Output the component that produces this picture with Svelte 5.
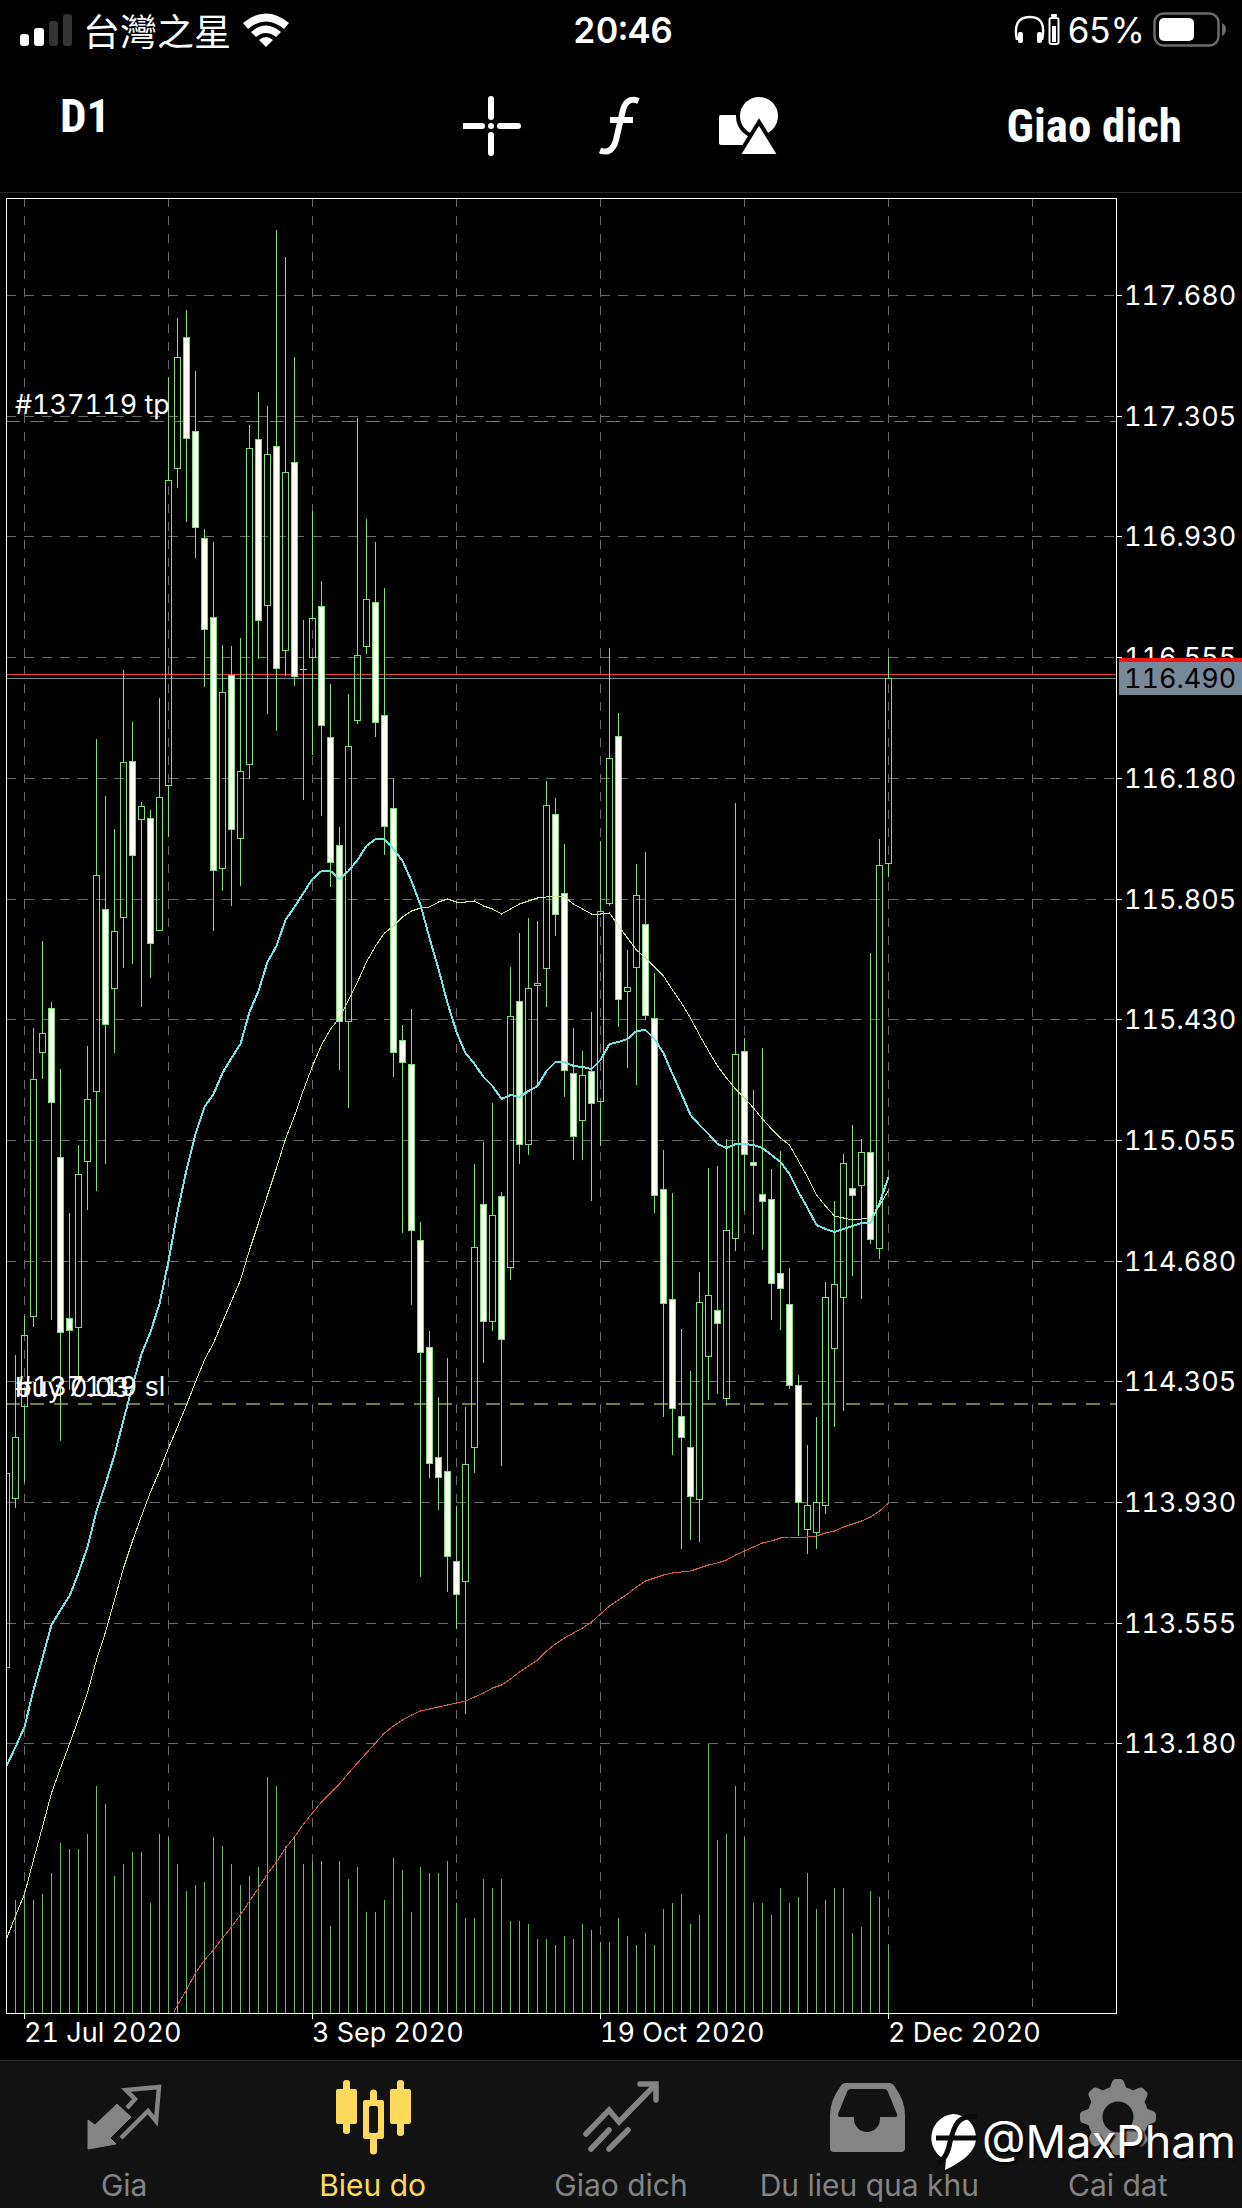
<script>
	// one bar every 9 units, the first one sits on the left edge of the plot
	const FIRST = 6;
	const STEP = 9;
	const BOTTOM = 2013;
	const barX = (i) => FIRST + i * STEP;

	// high, body top, body bottom, low, bearish
	const candles = [
		[1473, 1473, 1667, 1667, 0], [1355, 1437, 1498, 1508, 0], [1316, 1335, 1406, 1482, 0],
		[1028, 1079, 1316, 1327, 0], [941, 1033, 1052, 1079, 0], [1002, 1008, 1102, 1320, 1],
		[1069, 1157, 1332, 1441, 1], [1213, 1318, 1330, 1390, 1], [1145, 1174, 1327, 1382, 0],
		[1046, 1099, 1161, 1210, 0], [739, 875, 1091, 1191, 0], [796, 909, 1024, 1164, 1],
		[829, 931, 988, 1053, 0], [670, 762, 917, 968, 0], [722, 761, 855, 964, 1],
		[802, 806, 819, 1007, 0], [810, 818, 943, 978, 1], [698, 797, 930, 931, 0],
		[377, 480, 785, 837, 0], [318, 357, 468, 488, 0], [310, 337, 438, 522, 1],
		[371, 431, 527, 558, 1], [529, 538, 629, 687, 1], [542, 617, 870, 931, 1],
		[645, 692, 868, 891, 0], [646, 675, 829, 906, 1], [638, 771, 838, 886, 0],
		[425, 448, 764, 779, 0], [392, 439, 620, 659, 1], [406, 454, 605, 714, 0],
		[230, 446, 668, 731, 1], [257, 472, 650, 676, 0], [357, 462, 676, 686, 1],
		[620, 669, 669, 800, 0], [511, 618, 657, 755, 0], [581, 606, 725, 816, 1],
		[684, 737, 862, 887, 1], [827, 845, 1021, 1070, 1], [694, 746, 1021, 1108, 0],
		[418, 655, 720, 724, 0], [519, 599, 646, 654, 0], [542, 602, 722, 737, 1],
		[588, 715, 826, 855, 1], [778, 808, 1052, 1077, 1], [1025, 1040, 1062, 1233, 1],
		[1009, 1064, 1230, 1305, 1], [1222, 1240, 1352, 1577, 1], [1331, 1347, 1463, 1478, 1],
		[1397, 1457, 1477, 1510, 1], [1358, 1471, 1556, 1592, 1], [1506, 1561, 1594, 1629, 1],
		[1407, 1464, 1581, 1714, 0], [1164, 1247, 1447, 1473, 0], [1142, 1204, 1321, 1363, 1],
		[1103, 1215, 1321, 1331, 0], [1192, 1196, 1339, 1466, 1], [967, 1016, 1267, 1280, 0],
		[933, 1001, 1144, 1164, 1], [918, 988, 1144, 1155, 0], [921, 983, 985, 1087, 0],
		[781, 805, 968, 1007, 0], [798, 814, 914, 936, 1], [844, 893, 1070, 1097, 1],
		[1028, 1073, 1136, 1160, 1], [1051, 1075, 1120, 1160, 0], [1012, 1071, 1103, 1201, 1],
		[841, 911, 1101, 1146, 0], [648, 758, 903, 906, 0], [713, 736, 999, 1027, 1],
		[950, 987, 991, 1068, 0], [864, 895, 967, 1085, 0], [852, 924, 1015, 1020, 1],
		[973, 1018, 1195, 1213, 1], [1150, 1189, 1303, 1417, 1], [1193, 1299, 1408, 1455, 1],
		[1329, 1416, 1437, 1549, 1], [1371, 1447, 1496, 1540, 1], [1272, 1302, 1499, 1542, 0],
		[1168, 1295, 1356, 1400, 0], [1166, 1310, 1323, 1394, 1], [1139, 1230, 1398, 1406, 0],
		[803, 1054, 1238, 1251, 0], [1038, 1051, 1154, 1211, 1], [1090, 1162, 1165, 1235, 1],
		[1048, 1194, 1201, 1250, 1], [1169, 1199, 1283, 1320, 1], [1151, 1273, 1288, 1330, 1],
		[1268, 1304, 1385, 1389, 1], [1375, 1385, 1502, 1536, 1], [1445, 1505, 1529, 1554, 0],
		[1417, 1502, 1532, 1549, 0], [1282, 1297, 1505, 1514, 0], [1201, 1284, 1348, 1427, 0],
		[1154, 1163, 1297, 1411, 0], [1125, 1188, 1195, 1276, 1], [1139, 1152, 1185, 1299, 0],
		[953, 1152, 1239, 1244, 1], [839, 865, 1248, 1259, 0], [657, 678, 863, 877, 0]
	];

	const volumes = [
		0, 113, 119, 113, 119, 140, 170, 164, 164, 179, 227, 209, 137, 149, 161, 161, 110, 179, 176,
		149, 122, 128, 131, 176, 167, 149, 128, 137, 146, 236, 227, 167, 176, 149, 152, 152, 87, 152,
		134, 146, 101, 101, 113, 155, 143, 101, 146, 140, 140, 152, 110, 95, 95, 134, 125, 134, 92, 92,
		89, 74, 74, 68, 77, 74, 89, 83, 71, 71, 95, 77, 68, 80, 68, 104, 110, 119, 89, 98, 269, 173,
		179, 227, 176, 110, 110, 98, 125, 110, 116, 140, 104, 113, 125, 125, 80, 86, 122, 116, 68
	];

	const fast = [
		1766, 1747, 1727, 1690, 1658, 1625, 1610, 1596, 1573, 1547, 1511, 1484, 1455, 1420, 1386, 1354,
		1332, 1304, 1261, 1212, 1170, 1134, 1107, 1094, 1073, 1058, 1044, 1012, 991, 962, 946, 920, 907,
		893, 879, 871, 871, 879, 871, 860, 846, 839, 839, 849, 861, 881, 905, 938, 969, 1003, 1032,
		1053, 1064, 1077, 1086, 1099, 1095, 1097, 1091, 1086, 1071, 1062, 1062, 1066, 1067, 1069, 1060,
		1044, 1042, 1039, 1031, 1030, 1039, 1053, 1074, 1094, 1115, 1125, 1134, 1144, 1148, 1144, 1144,
		1145, 1148, 1155, 1162, 1174, 1192, 1208, 1225, 1229, 1232, 1229, 1226, 1223, 1223, 1203, 1177
	];
	const slow = [
		1939, 1916, 1894, 1860, 1827, 1793, 1768, 1744, 1719, 1693, 1660, 1632, 1600, 1568, 1541, 1516,
		1492, 1471, 1448, 1427, 1405, 1382, 1360, 1343, 1322, 1301, 1280, 1250, 1223, 1195, 1168, 1139,
		1116, 1090, 1066, 1045, 1029, 1018, 1000, 982, 962, 946, 933, 926, 917, 911, 908, 907, 902, 899,
		902, 902, 901, 906, 909, 914, 909, 904, 901, 898, 897, 896, 897, 904, 909, 914, 914, 913, 926,
		938, 950, 958, 967, 976, 990, 1003, 1018, 1035, 1051, 1066, 1078, 1089, 1098, 1108, 1119, 1129,
		1138, 1145, 1161, 1177, 1195, 1206, 1216, 1218, 1220, 1219, 1218, 1206, 1190
	];
	// enters the plot from below at bar 19
	const trend = [
		2005, 1990, 1973, 1960, 1950, 1938, 1927, 1915, 1901, 1888, 1874, 1862, 1848, 1837, 1824, 1813,
		1802, 1793, 1784, 1773, 1763, 1753, 1743, 1733, 1726, 1720, 1715, 1711, 1709, 1707, 1705, 1703,
		1701, 1697, 1693, 1688, 1685, 1679, 1672, 1666, 1660, 1651, 1644, 1638, 1633, 1628, 1622, 1614,
		1606, 1600, 1594, 1587, 1581, 1578, 1575, 1573, 1572, 1571, 1568, 1565, 1563, 1560, 1555, 1551,
		1547, 1543, 1541, 1538, 1537, 1537, 1537, 1536, 1533, 1531, 1527, 1524, 1521, 1517, 1511, 1503
	];
	const toPoints = (ys, from = 0) => ys.map((y, i) => `${barX(i + from) + 0.5},${y}`).join(' ');

	const prices = [
		'117.680', '117.305', '116.930', '116.555', '116.180', '115.805', '115.430',
		'115.055', '114.680', '114.305', '113.930', '113.555', '113.180'
	].map((label, i) => ({ label, y: Math.round(295 + i * 120.7) + 0.5 }));

	const columns = [24, 168, 312, 456, 600, 744, 888, 1032];
	const dates = [
		{ label: '21 Jul 2020', x: 24 },
		{ label: '3 Sep 2020', x: 312 },
		{ label: '19 Oct 2020', x: 600 },
		{ label: '2 Dec 2020', x: 888 }
	];

	const teeth = [0, 45, 90, 135, 180, 225, 270, 315];

	let active = $state('chart');
</script>

{#snippet quotes()}
	<polygon points="4,43 11,48 33,27 47,40 26,61 32,67 4,72" fill="currentColor" stroke="currentColor" stroke-width="1" stroke-linejoin="round" />
	<polyline points="43,31 51,22 42,13 75,10 72,44 64,34 37,61" fill="none" stroke="currentColor" stroke-width="4.5" />
{/snippet}

{#snippet chart()}
	<g fill="currentColor">
		<rect x="3" y="12" width="21" height="35" rx="2" />
		<rect x="10" y="3" width="7" height="54" rx="3" />
		<rect x="57" y="12" width="21" height="35" rx="2" />
		<rect x="64" y="3" width="7" height="56" rx="3" />
		<path fill-rule="evenodd" d="M32 23h17a2 2 0 0 1 2 2v35a2 2 0 0 1-2 2H32a2 2 0 0 1-2-2V25a2 2 0 0 1 2-2zM38 29a2 2 0 0 0-2 2v23a2 2 0 0 0 2 2h5a2 2 0 0 0 2-2V31a2 2 0 0 0-2-2z" />
		<path d="M37 24v-8a3 3 0 0 1 7 0v8zM37 61v13a3 3 0 0 0 7 0V61z" />
	</g>
{/snippet}

{#snippet trade()}
	<g fill="none" stroke="currentColor" stroke-width="5.5" stroke-linecap="round">
		<path d="M5 57 28 33 38 45 73 9" stroke-linejoin="miter" />
		<path d="M59 7H75V23" />
		<path d="M10 72 28 53M28 72 47 53" />
	</g>
{/snippet}

{#snippet history()}
	<path fill="currentColor" fill-rule="evenodd" d="M19 6H60Q64 6 66 10Q76 24 76 38V71Q76 75 72 75H5Q1 75 1 71V38Q1 24 11 10Q13 6 17 6zM22 12Q19 12 18 15L9 37Q9 40 11 40H25V42A13 13 0 0 0 51 42V40H66Q69 40 68 37L59 15Q58 12 55 12z" />
{/snippet}

{#snippet settings()}
	<g fill="currentColor">
		{#each teeth as angle}
			<path d="M31 13 34 5Q35 2 38 2H42Q45 2 46 5L49 13z" transform="rotate({angle} 40 40)" />
		{/each}
	</g>
	<circle cx="40" cy="40" r="23" fill="none" stroke="currentColor" stroke-width="15" />
{/snippet}

{#snippet tab(id, label, icon)}
	<button class="tab" class:active={active === id} onclick={() => (active = id)}>
		<svg viewBox="0 0 80 80" width="80" height="80" aria-hidden="true">{@render icon()}</svg>
		<span>{label}</span>
	</button>
{/snippet}

<div class="app">
	<div class="status">
		<div class="left">
			<svg viewBox="0 0 52 34" width="52" height="34" aria-hidden="true">
				<rect x="0" y="21" width="9" height="12" rx="3" fill="#fff" />
				<rect x="14" y="15" width="10" height="18" rx="3" fill="#fff" />
				<rect x="29" y="8" width="9" height="25" rx="3" fill="#333" />
				<rect x="43" y="1" width="9" height="32" rx="3" fill="#333" />
			</svg>
			<span class="carrier">台灣之星</span>
			<svg viewBox="0 0 48 34" width="48" height="34" aria-hidden="true" fill="#fff">
				<path d="M1 10Q24-9 47 10L42 16Q24 1 6 16z" />
				<path d="M9 19Q24 6 39 19L34 24Q24 16 14 24z" />
				<path d="M17 27Q24 21 31 27L24 34z" />
			</svg>
		</div>
		<span class="time">20:46</span>
		<div class="right">
			<svg viewBox="0 0 46 32" width="46" height="32" aria-hidden="true">
				<path d="M3 26Q-2 3 16 3Q33 3 28 26" fill="none" stroke="#fff" stroke-width="2.5" />
				<rect x="4" y="18" width="5" height="11" rx="2" fill="#fff" />
				<rect x="23" y="18" width="5" height="11" rx="2" fill="#fff" />
				<rect x="35.5" y="4" width="9" height="26" rx="2" fill="none" stroke="#fff" stroke-width="2" />
				<rect x="38" y="12" width="4" height="16" fill="#fff" />
				<rect x="37" y="0" width="6" height="3" rx="1" fill="#fff" />
			</svg>
			<span class="level">65%</span>
			<svg viewBox="0 0 73 36" width="73" height="36" aria-hidden="true">
				<rect x="1.5" y="1.5" width="64" height="32" rx="9" fill="none" stroke="#6b6b6b" stroke-width="2.5" />
				<rect x="6" y="6" width="35" height="23" rx="5" fill="#fff" />
				<path d="M69 11Q73 13 73 17Q73 22 69 24z" fill="#6b6b6b" />
			</svg>
		</div>
	</div>

	<header>
		<button class="period">D1</button>
		<div class="tools">
			<button aria-label="Crosshair">
				<svg viewBox="0 0 60 60" width="60" height="60">
					<path d="M1 30H19M37 30H55M28 3V21M28 39V57" stroke="#fff" stroke-width="6" stroke-linecap="round" />
					<circle cx="28" cy="30" r="3" fill="#fff" />
				</svg>
			</button>
			<button aria-label="Indicators">
				<svg viewBox="0 0 60 60" width="60" height="60" fill="none" stroke="#fff" stroke-width="6">
					<path d="M47.500 5Q35 0 31.500 16L25 44Q21 59 9 54.500" />
					<path d="M19 24H42" />
				</svg>
			</button>
			<button aria-label="Objects">
				<svg viewBox="0 0 60 60" width="60" height="60">
					<rect x="0" y="19" width="30" height="30" rx="2" fill="#fff" />
					<circle cx="40" cy="20" r="21" fill="#fff" stroke="#000" stroke-width="4" />
					<path d="M40 26 61 60H19z" fill="#fff" stroke="#000" stroke-width="4" />
				</svg>
			</button>
		</div>
		<button class="deal">Giao dich</button>
	</header>

	<main>
		<svg class="plot" viewBox="0 193 1242 1867" role="img" aria-label="D1">
			<g class="grid">
				{#each prices as { y }}
					<line x1="6" x2="1116" y1={y} y2={y} stroke-dasharray="10 8" />
				{/each}
				{#each columns as x}
					<line x1={x + 0.5} x2={x + 0.5} y1="198" y2="2013" stroke-dasharray="9 9" />
				{/each}
			</g>

			<g class="volume">
				{#each volumes as v, i}
					<line x1={barX(i) + 0.5} x2={barX(i) + 0.5} y1={BOTTOM - v} y2={BOTTOM} />
				{/each}
			</g>

			<g class="levels">
				<line x1="6" x2="1116" y1="421.5" y2="421.5" class="red" stroke-dasharray="14 10" />
				<line x1="6" x2="1116" y1="1403.5" y2="1403.5" class="red" stroke-dasharray="14 10" />
				<line x1="6" x2="1116" y1="1404.5" y2="1404.5" class="order" stroke-dasharray="14 10" />
				<line x1="6" x2="1116" y1="674.5" y2="674.5" class="red" />
				<line x1="6" x2="1116" y1="678.5" y2="678.5" class="bid" />
			</g>

			<g class="candles">
				{#each candles as [high, top, bottom, low, bear], i}
					{@const x = barX(i)}
					{#if high < top}
						<line x1={x + 0.5} x2={x + 0.5} y1={high} y2={top} />
					{/if}
					{#if low > bottom}
						<line x1={x + 0.5} x2={x + 0.5} y1={bottom + 1} y2={low} />
					{/if}
					{#if top === bottom}
						<line x1={x - 3} x2={x + 4} y1={top + 0.5} y2={top + 0.5} />
					{:else if i === 0}
						<path d="M{x} {top + 0.5}h3.5v{bottom - top}h-3.5" />
					{:else}
						<rect class:bear x={x - 2.5} y={top + 0.5} width="6" height={bottom - top} />
					{/if}
				{/each}
			</g>

			<polyline class="trend" points="174,2012 {toPoints(trend, 19)}" />
			<polyline class="slow" points={toPoints(slow)} />
			<polyline class="fast" points={toPoints(fast)} />

			<rect class="frame" x="6.5" y="198.5" width="1110" height="1815" />

			<g class="labels">
				{#each prices as { label, y }}
					<line x1="1117" x2="1122" y1={y} y2={y} />
					<text x="1124" y={y + 9}>{label}</text>
				{/each}
				{#each dates as { label, x }}
					<line x1={x + 0.5} x2={x + 0.5} y1="2014" y2="2019" />
					<text {x} y="2042">{label}</text>
				{/each}
				<text x="15" y="414">#137119 tp</text>
				<text x="15" y="1396">#137119 sl</text>
				<text x="15" y="1397">buy 0.03</text>
				<rect x="1119" y="658" width="123" height="10" fill="#f01414" />
				<rect x="1119" y="662" width="123" height="33" fill="#778899" />
				<text x="1124" y="688" class="current">116.490</text>
			</g>
		</svg>
	</main>

	<nav>
		{@render tab('quotes', 'Gia', quotes)}
		{@render tab('chart', 'Bieu do', chart)}
		{@render tab('trade', 'Giao dich', trade)}
		{@render tab('history', 'Du lieu qua khu', history)}
		{@render tab('settings', 'Cai dat', settings)}
		<div class="watermark">
			<svg viewBox="0 0 52 60" width="52" height="60" aria-hidden="true">
				<path d="M25 2A24 24 0 0 1 48 26C48 40 34 50 17 58L18 48A24 24 0 0 1 25 2z" fill="#fff" />
				<path d="M49 5C30 2 26 14 22 30C20 42 16 48 10 51M8 26H49" fill="none" stroke="#0a0a0a" stroke-width="5" />
			</svg>
			<span>@MaxPham</span>
		</div>
	</nav>
</div>

<style>
	:global(body) {
		background: #000;
	}
	.app {
		color: #fff;
		background: #000;
		font-family: Inter, Roboto, sans-serif;
	}
	button {
		padding: 0;
		border: 0;
		background: none;
		color: inherit;
		font: inherit;
		cursor: pointer;
	}
	svg {
		display: block;
		flex: none;
	}

	.status {
		display: grid;
		grid-template-columns: 1fr auto 1fr;
		align-items: center;
		height: 60px;
		padding: 0 16px 0 20px;
		font-size: 35px;
	}
	.left,
	.right {
		display: flex;
		align-items: center;
		gap: 11px;
	}
	.right {
		justify-content: flex-end;
		gap: 8px;
	}
	.carrier {
		font-family: 'Noto Sans CJK TC', sans-serif;
		font-size: 37px;
		line-height: 40px;
	}
	.time {
		font-weight: 600;
		font-variant-numeric: tabular-nums;
	}

	header {
		display: grid;
		grid-template-columns: 1fr auto 1fr;
		align-items: center;
		height: 132px;
		padding: 0 60px;
		border-bottom: 1px solid #2b2b2b;
		font-family: 'Liberation Sans Narrow', 'Roboto Condensed', 'Arial Narrow', sans-serif;
		font-size: 47px;
		font-weight: 700;
		line-height: 48px;
	}
	.period {
		justify-self: start;
		padding-bottom: 20px;
	}
	.deal {
		justify-self: end;
	}
	.tools {
		display: flex;
		align-items: center;
		gap: 68px;
	}
	.tools button {
		width: 60px;
		height: 60px;
	}

	.plot {
		width: 100%;
		height: auto;
		fill: none;
		shape-rendering: crispEdges;
	}
	.grid {
		stroke: #6c6c6c;
	}
	.volume {
		stroke: #6fb968;
	}
	.red {
		stroke: #ee3c46;
	}
	.order {
		stroke: #6f7a3c;
	}
	.bid {
		stroke: #778c8c;
	}
	.candles {
		stroke: #84dc7c;
	}
	.bear {
		fill: #fbfff2;
	}
	.trend {
		stroke: #d8604e;
	}
	.slow {
		stroke: #c3e69a;
	}
	.fast {
		stroke: #74e4e4;
		stroke-width: 2;
	}
	.frame {
		stroke: #fff;
	}
	.labels {
		font-size: 27px;
		font-variant-numeric: tabular-nums;
	}
	.labels line {
		stroke: #fff;
	}
	.labels text {
		fill: #fff;
	}
	.labels .current {
		fill: #000;
	}

	nav {
		position: relative;
		display: grid;
		grid-template-columns: repeat(5, 1fr);
		height: 147px;
		border-top: 1px solid #303030;
		background: #121212;
	}
	.tab {
		display: flex;
		flex-direction: column;
		align-items: center;
		gap: 12px;
		padding-top: 16px;
		color: #848484;
		font-size: 30px;
		line-height: 32px;
		white-space: nowrap;
	}
	.active {
		color: #ffd95c;
	}
	.watermark {
		position: absolute;
		right: 6px;
		bottom: 36px;
		display: flex;
		align-items: center;
		gap: 2px;
		font-size: 45px;
		line-height: 60px;
		text-shadow: 2px 2px 2px #000;
	}
</style>
